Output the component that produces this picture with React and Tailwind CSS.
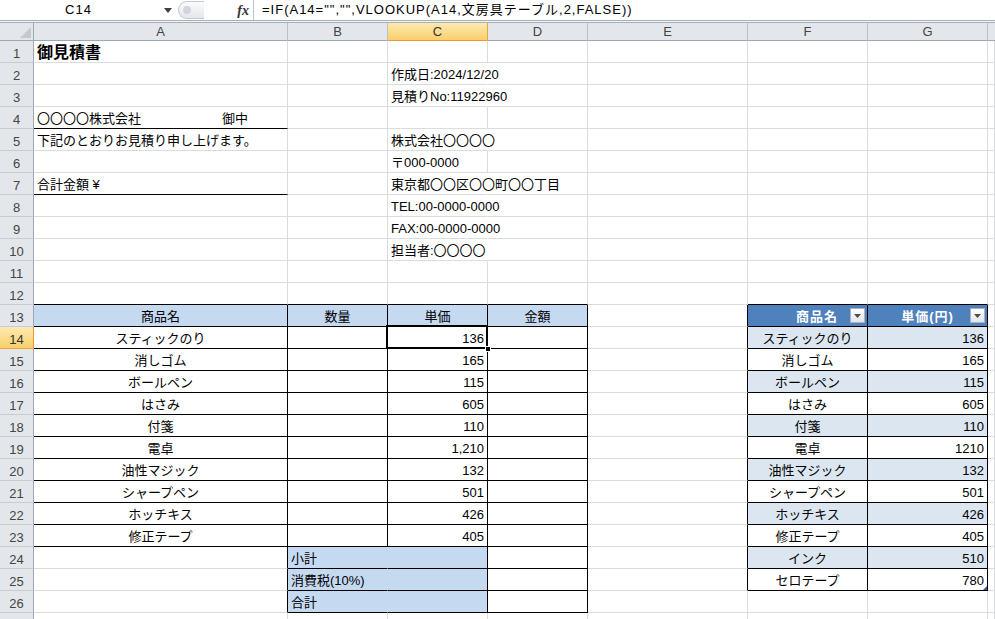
import React from 'react';
import clsx from 'clsx';

const R = { g: 'border-r-[#dadcdd]', k: 'border-r-black', n: 'border-r-transparent' };
const B = { g: 'border-b-[#dadcdd]', k: 'border-b-black', n: 'border-b-transparent' };

const cols = ['A', 'B', 'C', 'D', 'E', 'F', 'G', 'H'];

const items = [
    ['スティックのり', '136'],
    ['消しゴム', '165'],
    ['ボールペン', '115'],
    ['はさみ', '605'],
    ['付箋', '110'],
    ['電卓', '1,210'],
    ['油性マジック', '132'],
    ['シャープペン', '501'],
    ['ホッチキス', '426'],
    ['修正テープ', '405'],
];

const master = [
    ['スティックのり', '136'],
    ['消しゴム', '165'],
    ['ボールペン', '115'],
    ['はさみ', '605'],
    ['付箋', '110'],
    ['電卓', '1210'],
    ['油性マジック', '132'],
    ['シャープペン', '501'],
    ['ホッチキス', '426'],
    ['修正テープ', '405'],
    ['インク', '510'],
    ['セロテープ', '780'],
];

// 行ごとのセル定義
const buildRows = () => {
    const rows = {};
    for (let i = 1; i <= 27; i++) rows[i] = {};

    rows[1].A = { t: '御見積書', big: true };
    rows[2].C = { t: '作成日:2024/12/20', r: 'n' };
    rows[3].C = { t: '見積りNo:11922960', r: 'n' };
    rows[4].A = { t: '〇〇〇〇株式会社', t2: '御中', b: 'k' };
    rows[5].A = { t: '下記のとおりお見積り申し上げます。' };
    rows[5].C = { t: '株式会社〇〇〇〇', r: 'n' };
    rows[6].C = { t: '〒000-0000' };
    rows[7].A = { t: '合計金額 ¥', b: 'k' };
    rows[7].C = { t: '東京都〇〇区〇〇町〇〇丁目', r: 'n' };
    rows[8].C = { t: 'TEL:00-0000-0000', r: 'n' };
    rows[9].C = { t: 'FAX:00-0000-0000', r: 'n' };
    rows[10].C = { t: '担当者:〇〇〇〇', r: 'n' };

    ['A', 'B', 'C', 'D', 'F', 'G'].forEach((c) => (rows[12][c] = { b: 'k' }));

    const hd = 'bg-[#c5d9f1]';
    rows[13].A = { t: '商品名', align: 'center', bg: hd, r: 'k', b: 'k' };
    rows[13].B = { t: '数量', align: 'center', bg: hd, r: 'k', b: 'k' };
    rows[13].C = { t: '単価', align: 'center', bg: hd, r: 'k', b: 'k' };
    rows[13].D = { t: '金額', align: 'center', bg: hd, r: 'k', b: 'k' };
    rows[13].E = { r: 'k' };
    rows[13].F = { t: '商品名', th: true, pad: true, r: 'k', b: 'k' };
    rows[13].G = { t: '単価(円)', th: true, r: 'k', b: 'k' };

    items.forEach(([name, price], i) => {
        const n = 14 + i;
        rows[n].A = { t: name, align: 'center', r: 'k', b: 'k' };
        rows[n].B = { r: 'k', b: 'k' };
        rows[n].C = { t: price, align: 'right', r: 'k', b: 'k', sel: n === 14 };
        rows[n].D = { r: 'k', b: 'k' };
    });

    ['小計', '消費税(10%)', '合計'].forEach((label, i) => {
        const n = 24 + i;
        rows[n].A = { r: 'k' };
        rows[n].B = { t: label, bg: hd, r: 'n', b: 'k' };
        rows[n].C = { bg: hd, r: 'k', b: 'k' };
        rows[n].D = { r: 'k', b: 'k' };
    });

    master.forEach(([name, price], i) => {
        const n = 14 + i;
        const bg = i % 2 === 0 ? 'bg-[#dce6f1]' : '';
        rows[n].E = { r: 'k' };
        rows[n].F = { t: name, align: 'center', bg, r: 'k', b: 'k' };
        rows[n].G = { t: price, align: 'right', bg, r: 'k', b: 'k', grip: n === 25 };
    });

    return rows;
};

const rows = buildRows();

const FilterButton = () => (
    <span className="absolute right-[2px] top-[3px] flex h-[15px] w-[15px] items-center justify-center border border-[#a9b3bf] bg-linear-to-b from-[#ffffff] to-[#e1e5ea]">
        <svg width="7" height="4" viewBox="0 0 7 4">
            <path d="M0 0h7L3.5 4z" fill="#4d4d4d" />
        </svg>
    </span>
);

const Cell = ({ c = {} }) => {
    const { t, t2, align, r = 'g', b = 'g', bg, big, th, pad, sel, grip } = c;
    return (
        <div
            className={clsx(
                'h-[22px] whitespace-nowrap border-r border-b px-[3px] pt-px text-[13px] leading-[21px] text-black',
                R[r],
                B[b],
                bg,
                align === 'center' && 'text-center',
                align === 'right' && 'text-right',
                th && 'relative bg-[#4f81bd] text-center font-bold tracking-[1px] text-white',
                pad && 'pl-[22px]',
                (sel || grip) && 'relative',
                big && 'text-[16px] font-bold'
            )}
        >
            {t}
            {t2 && <span className="ml-[81px]">{t2}</span>}
            {th && <FilterButton />}
            {sel && (
                <>
                    <span className="absolute -left-[2px] -top-[2px] bottom-[-1px] right-[-1px] border-2 border-black" />
                    <span className="absolute -bottom-[4px] -right-[4px] h-[6px] w-[6px] border border-white bg-black" />
                </>
            )}
            {grip && (
                <svg width="4" height="4" viewBox="0 0 4 4" className="absolute bottom-0 right-0">
                    <path d="M4 0v4H0z" fill="#3e5b8a" />
                </svg>
            )}
        </div>
    );
};

const FormulaBar = () => (
    <>
        <div className="flex h-[21px] border-b border-[#a7afb9] bg-white text-[13px]">
            <div className="flex w-[178px] items-center">
                <span className="w-[157px] text-center tracking-[1px]">C14</span>
                <svg width="8" height="5" viewBox="0 0 8 5" className="ml-[7px]">
                    <path d="M0 0h8L4 5z" fill="#404040" />
                </svg>
            </div>
            <div className="flex w-[75px] items-center justify-between py-[1px] pr-[4px]">
                <div className="flex h-[18px] w-[26px] items-center rounded-l-full border border-r-0 border-[#c3c8cf] bg-linear-to-b from-[#fbfbfc] to-[#e4e7eb] pl-[4px]">
                    <span className="h-[8px] w-[8px] rounded-full bg-[#d2d6dc]" />
                </div>
                <span className="font-['Liberation_Serif',serif] text-[14px] font-bold italic text-[#333]">fx</span>
            </div>
            <div className="flex flex-1 items-center border-l border-[#bcc3cc] pl-[8px] tracking-[1px]">
                =IF(A14="","",VLOOKUP(A14,文房具テーブル,2,FALSE))
            </div>
        </div>
        <div className="h-[2px] border-b border-[#a7afb9] bg-[#f3f4f6]" />
    </>
);

const App = () => {
    return (
        <div className="h-[619px] w-[995px] overflow-hidden bg-white font-['Liberation_Sans','Noto_Sans_CJK_JP',sans-serif] text-black">
            <FormulaBar />

            <div className="grid grid-cols-[34px_254px_100px_100px_100px_160px_120px_120px_7px]">
                {/* 列見出し */}
                <div className="relative h-[18px] border-r border-b border-[#9ea8b4] bg-[#e3e7ec]">
                    <svg width="11" height="11" viewBox="0 0 11 11" className="absolute bottom-[2px] right-[2px]">
                        <path d="M11 0v11H0z" fill="#c3c9d0" />
                    </svg>
                </div>
                {cols.map((c) => (
                    <div
                        key={c}
                        className={clsx(
                            'h-[18px] border-b text-center text-[13px] leading-[17px]',
                            c === 'H' ? 'border-r-0' : 'border-r',
                            c === 'C'
                                ? 'border-r-[#e3a73d] border-b-[#f29436] bg-linear-to-b from-[#fdeab0] to-[#f8d06a] text-[#333]'
                                : 'border-r-[#b9c1cb] border-b-[#9ea8b4] bg-[#e3e7ec] text-[#444]'
                        )}
                    >
                        {c === 'H' ? '' : c}
                    </div>
                ))}

                {Object.keys(rows).map((n) => (
                    <React.Fragment key={n}>
                        <div
                            className={clsx(
                                'h-[22px] border-r border-b pt-[3px] text-center text-[13px] leading-[19px]',
                                n === '14'
                                    ? 'border-r-[#f29436] border-b-[#e3a73d] bg-linear-to-b from-[#fdeab0] to-[#f8d06a] text-[#333]'
                                    : 'border-r-[#9ea8b4] border-b-[#c6ccd4] bg-[#e3e7ec] text-[#444]'
                            )}
                        >
                            {n === '27' ? '' : n}
                        </div>
                        {cols.map((c) => (
                            <Cell key={c} c={rows[n][c]} />
                        ))}
                    </React.Fragment>
                ))}
            </div>
        </div>
    );
};

export default App;
